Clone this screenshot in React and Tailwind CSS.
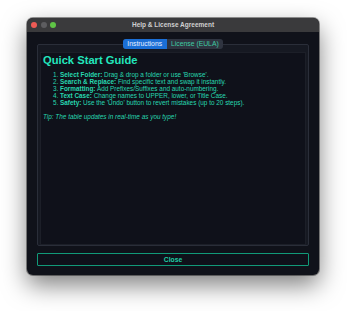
import React from "react";

const steps = [
  ["Select Folder:", " Drag & drop a folder or use 'Browse'."],
  ["Search & Replace:", " Find specific text and swap it instantly."],
  ["Formatting:", " Add Prefixes/Suffixes and auto-numbering."],
  ["Text Case:", " Change names to UPPER, lower, or Title Case."],
  ["Safety:", " Use the 'Undo' button to revert mistakes (up to 20 steps)."],
];

export default function App() {
  return (
    <div className="w-[347px] h-[311px] bg-white pt-[18px] pl-[27px] font-['Liberation_Sans',Arial,sans-serif]">
      <div className="w-[292px] h-[257px] rounded-[6px] overflow-hidden flex flex-col bg-[#10121a] shadow-[0_10px_24px_rgba(0,0,0,0.5)] ring-1 ring-black/40">
        {/* title bar */}
        <div className="h-[14px] bg-[#3a3a3c] flex items-center relative shrink-0">
          <div className="flex items-center gap-[3.5px] pl-[4px]">
            <span className="w-[6px] h-[6px] rounded-full bg-[#ee5b55]" />
            <span className="w-[6px] h-[6px] rounded-full bg-[#5d5d60]" />
            <span className="w-[6px] h-[6px] rounded-full bg-[#5fc446]" />
          </div>
          <div className="absolute inset-0 flex items-center justify-center text-[6.5px] font-bold text-[#cfcfcf]">
            Help &amp; License Agreement
          </div>
        </div>

        {/* body */}
        <div className="flex-1 flex flex-col px-[10px] pt-[7px] pb-[9px]">
          <div className="flex justify-center relative z-10">
            <div className="flex h-[10px] rounded-[3px] overflow-hidden bg-[#2f3440] text-[6.8px] leading-[10px]">
              <div className="px-[4.5px] bg-[#1b6fd6] text-[#e8f0ff]">Instructions</div>
              <div className="px-[4.5px] text-[#3fcca4]">License (EULA)</div>
            </div>
          </div>
          <div className="-mt-[5px] flex-1 border border-[#2a2e39] bg-[#161922] rounded-[2px] pt-[7px] px-[2px] pb-0 flex flex-col">
            <div className="flex-1 bg-[#0f111a] border border-[#1c1f28] px-[2px] pt-[1px] text-[#27d8b0]">
              <div className="text-[11.2px] leading-[13px] font-bold text-[#22e6bd]">Quick Start Guide</div>
              <ol className="mt-[4px] pl-[10px] text-[6.4px] leading-[7px]">
                {steps.map(([label, rest], i) => (
                  <li key={i} className="flex">
                    <span className="w-[5px] text-right mr-[2px]">{i + 1}.</span>
                    <span>
                      <b>{label}</b>
                      {rest}
                    </span>
                  </li>
                ))}
              </ol>
              <div className="mt-[7px] text-[6.4px] leading-[7px] italic">
                Tip: The table updates in real-time as you type!
              </div>
            </div>
          </div>
          <button className="mt-[7px] h-[13px] w-full border border-[#119a79] rounded-[1px] bg-[#0f111a] text-[6.8px] leading-[11px] font-bold text-[#1fcfa4]">
            Close
          </button>
        </div>
      </div>
    </div>
  );
}
